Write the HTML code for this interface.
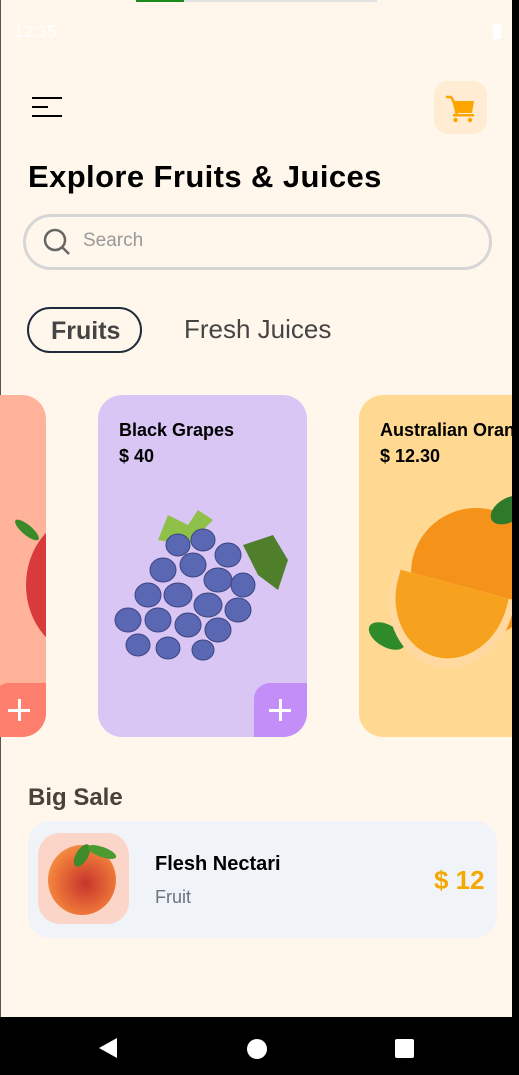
<!DOCTYPE html>
<html><head><meta charset="utf-8">
<style>
*{margin:0;padding:0;box-sizing:border-box}
body{width:519px;height:1075px;background:#fff7ec;position:relative;overflow:hidden;font-family:"Liberation Sans",Roboto,sans-serif}
.abs{position:absolute}
</style></head><body>
<div class="abs" style="left:0;top:0;width:1px;height:1017px;background:#555"></div>
<div class="abs" style="left:512px;top:0;width:7px;height:1075px;background:#000"></div>
<div class="abs" style="left:136px;top:0;width:48px;height:2px;background:#1a8a1a"></div>
<div class="abs" style="left:184px;top:0;width:193px;height:2px;background:#e3e3e3"></div>
<div class="abs" style="left:14px;top:22px;color:#fff;font-size:17px">12:35</div>
<div class="abs" style="left:493px;top:24px;width:8px;height:15px;background:#fff;border-radius:1px"></div>
<!-- menu -->
<div class="abs" style="left:32px;top:97px;width:30px;height:2px;background:#000"></div>
<div class="abs" style="left:32px;top:106px;width:16px;height:2px;background:#000"></div>
<div class="abs" style="left:32px;top:115px;width:30px;height:2px;background:#000"></div>
<!-- cart -->
<div class="abs" style="left:434px;top:81px;width:53px;height:53px;background:#ffecd2;border-radius:14px"></div>
<svg class="abs" style="left:446px;top:95px" width="30" height="28" viewBox="0 0 30 28">
<path d="M0 2h5l3 5" fill="none" stroke="#ffa500" stroke-width="2.5"/>
<path d="M6 6h22l-2 12H10z" fill="#ffa500"/>
<path d="M8 8l3 12" stroke="#ffa500" stroke-width="2.5"/>
<rect x="7" y="19" width="21" height="2.5" fill="#ffa500"/>
<circle cx="9.5" cy="25" r="2.2" fill="#ffa500"/><circle cx="24" cy="25" r="2.2" fill="#ffa500"/>
</svg>
<div class="abs" style="left:28px;top:159px;font-size:31px;font-weight:bold;color:#000;letter-spacing:0.4px">Explore Fruits &amp; Juices</div>
<!-- search -->
<div class="abs" style="left:23px;top:214px;width:469px;height:56px;border:3px solid #d6d6d6;border-radius:28px"></div>
<svg class="abs" style="left:42px;top:227px" width="30" height="30" viewBox="0 0 30 30"><circle cx="13" cy="13" r="10" fill="none" stroke="#666" stroke-width="2.5"/><path d="M20 20l7 7" stroke="#666" stroke-width="2.5"/></svg>
<div class="abs" style="left:83px;top:230px;font-size:19px;color:#999">Search</div>
<!-- tabs -->
<div class="abs" style="left:27px;top:307px;width:115px;height:46px;border:2.5px solid #1f2a3c;border-radius:23px"></div>
<div class="abs" style="left:51px;top:317px;font-size:25px;font-weight:bold;color:#444">Fruits</div>
<div class="abs" style="left:184px;top:314px;font-size:26px;color:#444">Fresh Juices</div>
<!-- left card -->
<div class="abs" style="left:-170px;top:395px;width:216px;height:342px;background:#ffb39b;border-radius:24px;overflow:hidden">
<div class="abs" style="right:-100px;top:120px;width:120px;height:140px;background:#d93a3a;border-radius:50%"></div>
<div class="abs" style="right:4px;top:130px;width:30px;height:10px;background:#3a8a2a;border-radius:50%;transform:rotate(40deg)"></div>
<div class="abs" style="right:0;bottom:0;width:53px;height:54px;background:#ff7f6e;border-top-left-radius:16px"></div>
</div>
<div class="abs" style="left:8px;top:709px;width:22px;height:3px;background:#fff"></div>
<div class="abs" style="left:18px;top:699px;width:3px;height:22px;background:#fff"></div>
<!-- grapes card -->
<div class="abs" style="left:98px;top:395px;width:209px;height:342px;background:#d9c6f5;border-radius:24px;overflow:hidden">
<div class="abs" style="left:21px;top:25px;font-size:18px;font-weight:bold;color:#000">Black Grapes</div>
<div class="abs" style="left:21px;top:51px;font-size:18px;font-weight:bold;color:#000">$ 40</div>
<svg class="abs" style="left:5px;top:105px" width="190" height="165" viewBox="0 0 190 165">
<path d="M55 40l10-25 20 10 10-15 15 10-25 25z" fill="#8fc04a"/>
<path d="M140 45l30-10 15 25-10 30-20-15z" fill="#4f7f2a"/>
<g fill="#5a67b3" stroke="#3d4580" stroke-width="1">
<ellipse cx="75" cy="45" rx="12" ry="11"/><ellipse cx="100" cy="40" rx="12" ry="11"/><ellipse cx="125" cy="55" rx="13" ry="12"/>
<ellipse cx="60" cy="70" rx="13" ry="12"/><ellipse cx="90" cy="65" rx="13" ry="12"/><ellipse cx="115" cy="80" rx="14" ry="12"/><ellipse cx="140" cy="85" rx="12" ry="12"/>
<ellipse cx="45" cy="95" rx="13" ry="12"/><ellipse cx="75" cy="95" rx="14" ry="12"/><ellipse cx="105" cy="105" rx="14" ry="12"/><ellipse cx="135" cy="110" rx="13" ry="12"/>
<ellipse cx="25" cy="120" rx="13" ry="12"/><ellipse cx="55" cy="120" rx="13" ry="12"/><ellipse cx="85" cy="125" rx="13" ry="12"/><ellipse cx="115" cy="130" rx="13" ry="12"/>
<ellipse cx="35" cy="145" rx="12" ry="11"/><ellipse cx="65" cy="148" rx="12" ry="11"/><ellipse cx="100" cy="150" rx="11" ry="10"/>
</g></svg>
<div class="abs" style="right:0;bottom:0;width:53px;height:54px;background:#c48ef8;border-top-left-radius:16px"></div>
</div>
<div class="abs" style="left:269px;top:709px;width:22px;height:3px;background:#fff"></div>
<div class="abs" style="left:279px;top:699px;width:3px;height:22px;background:#fff"></div>
<!-- orange card -->
<div class="abs" style="left:359px;top:395px;width:153px;height:342px;background:#ffd892;border-top-left-radius:24px;border-bottom-left-radius:24px;overflow:hidden">
<div class="abs" style="left:21px;top:25px;font-size:18px;font-weight:bold;color:#000;white-space:nowrap">Australian Orange</div>
<div class="abs" style="left:21px;top:51px;font-size:18px;font-weight:bold;color:#000">$ 12.30</div>
<div class="abs" style="left:52px;top:113px;width:130px;height:130px;background:#f5921a;border-radius:50%"></div>
<div class="abs" style="left:130px;top:103px;width:40px;height:24px;background:#2f7a2a;border-radius:50%;transform:rotate(-30deg)"></div>
<div class="abs" style="left:8px;top:230px;width:40px;height:22px;background:#2f8a2a;border-radius:50%;transform:rotate(30deg)"></div>
<div class="abs" style="left:23px;top:188px;width:125px;height:85px;background:#ffd9a0;border-radius:0 0 70px 70px/0 0 80px 80px;transform:rotate(15deg)"></div>
<div class="abs" style="left:30px;top:188px;width:112px;height:75px;background:#f7a21f;border-radius:0 0 60px 60px/0 0 70px 70px;transform:rotate(15deg)"></div>
</div>
<!-- big sale -->
<div class="abs" style="left:28px;top:784px;font-size:24px;font-weight:bold;color:#4a423a">Big Sale</div>
<div class="abs" style="left:28px;top:821px;width:469px;height:117px;background:#f0f3f7;border-radius:22px"></div>
<div class="abs" style="left:38px;top:833px;width:91px;height:91px;background:#fcd5c9;border-radius:22px"></div>
<div class="abs" style="left:48px;top:845px;width:68px;height:70px;background:radial-gradient(circle at 55% 55%,#c7342c,#ef7a3a 60%,#f7b04a);border-radius:50%"></div>
<div class="abs" style="left:76px;top:843px;width:12px;height:25px;background:#3f8a2a;border-radius:50%;transform:rotate(30deg)"></div>
<div class="abs" style="left:87px;top:847px;width:30px;height:10px;background:#4a9a30;border-radius:50%;transform:rotate(20deg)"></div>
<div class="abs" style="left:155px;top:853px;font-size:20px;font-weight:bold;color:#000">Flesh Nectari</div>
<div class="abs" style="left:155px;top:887px;font-size:18px;color:#6b7280">Fruit</div>
<div class="abs" style="left:434px;top:865px;font-size:26px;font-weight:bold;color:#f4a800">$ 12</div>
<!-- nav -->
<div class="abs" style="left:0;top:1017px;width:519px;height:58px;background:#000"></div>
<svg class="abs" style="left:98px;top:1037px" width="20" height="22"><path d="M19 1v20L1 11z" fill="#fff"/></svg>
<div class="abs" style="left:247px;top:1039px;width:20px;height:20px;background:#fff;border-radius:50%"></div>
<div class="abs" style="left:395px;top:1039px;width:19px;height:19px;background:#fff;border-radius:2px"></div>
</body></html>
